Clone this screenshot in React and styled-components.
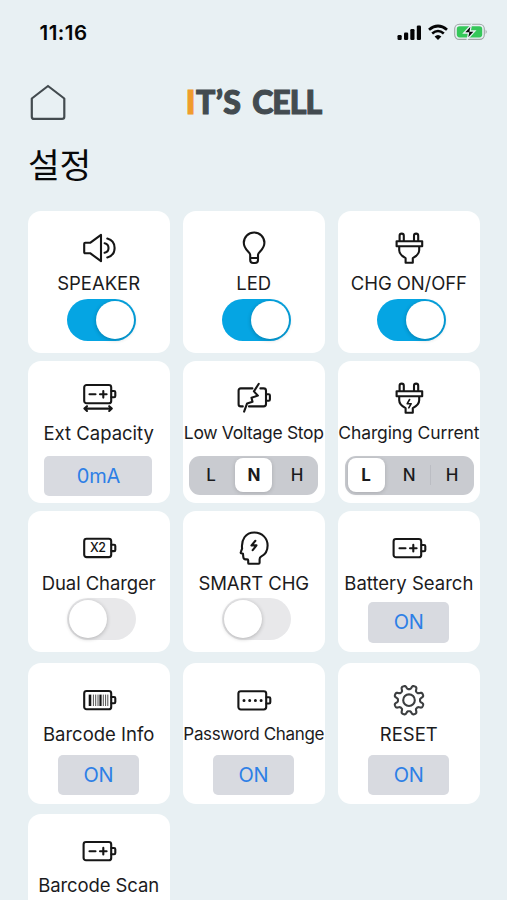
import React from "react";
import styled, { createGlobalStyle } from "styled-components";

const GlobalStyle = createGlobalStyle`
  * {
    box-sizing: border-box;
  }

  body {
    margin: 0;
    background: #e8f0f3;
    font-family: Inter, "Liberation Sans", "Noto Sans CJK KR", sans-serif;
    color: #1b1b1d;
  }
`;

const Screen = styled.main`
  width: 507px;
  height: 900px;
  overflow: hidden;
  background: #e8f0f3;
`;

const StatusBar = styled.div`
  display: flex;
  justify-content: space-between;
  align-items: center;
  height: 64px;
  padding: 0 19px 0 39.5px;
`;

const Time = styled.span`
  font-size: 20.5px;
  font-weight: 600;
  letter-spacing: 0.5px;
  color: #050506;
`;

const StatusIcons = styled.div`
  display: flex;
  align-items: center;
  gap: 6px;

  svg {
    display: block;
  }
`;

const Header = styled.header`
  display: grid;
  grid-template-columns: 1fr auto 1fr;
  align-items: center;
  height: 75px;
  padding: 0 29px;

  svg {
    display: block;
  }
`;

const Logo = styled.h1`
  display: flex;
  gap: 11px;
  margin: 0;
  font-family: Lato, "Liberation Sans", sans-serif;
  font-size: 32px;
  font-weight: 900;
  line-height: 40px;
  white-space: nowrap;
  color: #434b50;
  -webkit-text-stroke: 1.1px currentColor;
`;

const Word = styled.span`
  letter-spacing: ${(p) => p.$track}px;
`;

const Accent = styled.span`
  color: #f09c2c;
`;

const Title = styled.h2`
  margin: 0;
  height: 72px;
  padding-left: 28px;
  font-family: "Noto Sans CJK KR", sans-serif;
  font-size: 34.5px;
  font-weight: 400;
  line-height: 49px;
  letter-spacing: -0.2px;
  color: #08090a;
`;

const Grid = styled.section`
  display: flex;
  flex-direction: column;
  padding: 0 26.5px 0 28px;
`;

const Row = styled.div`
  display: grid;
  grid-template-columns: repeat(3, 141.8px);
  column-gap: 13.3px;
  margin-bottom: ${(p) => p.$gap}px;
`;

const Card = styled.article`
  display: flex;
  flex-direction: column;
  align-items: center;
  height: 141.5px;
  padding-top: 19px;
  border-radius: 13px;
  background: #fff;
`;

const Glyph = styled.svg`
  display: block;
  flex: none;
  width: 36px;
  height: 36px;
  fill: none;
  stroke: ${(p) => p.$tone || "#161616"};
  stroke-width: 2.1;
  stroke-linecap: round;
  stroke-linejoin: round;
`;

const Label = styled.span`
  height: 24px;
  margin-top: ${(p) => p.$top}px;
  margin-right: 0.5px;
  font-size: ${(p) => p.$size}px;
  line-height: 24px;
  letter-spacing: ${(p) => p.$track}px;
  white-space: nowrap;
`;

const Switch = styled.span`
  display: flex;
  justify-content: ${(p) => (p.$on ? "flex-end" : "flex-start")};
  width: 69px;
  height: 42px;
  margin: 3.5px 0 0 5px;
  padding: 2px;
  border-radius: 21px;
  background: ${(p) => (p.$on ? "#05a5e3" : "#e8e8ea")};
`;

const Knob = styled.span`
  width: 38px;
  height: 38px;
  border-radius: 50%;
  background: #fff;
  box-shadow: 0 1px 4px rgba(0, 0, 0, 0.24);
`;

const ValueButton = styled.button`
  width: ${(p) => p.$width}px;
  height: 40.5px;
  margin: ${(p) => p.$top}px 1px 0 0;
  padding: 0;
  border: none;
  border-radius: 5px;
  background: #d8dae0;
  color: #2d7fe6;
  font-family: inherit;
  font-size: 20px;
  letter-spacing: -0.3px;
`;

const Segments = styled.div`
  display: grid;
  grid-template-columns: repeat(3, 43px);
  width: 129px;
  height: 39px;
  margin-top: 10.5px;
  border-radius: 11px;
  background: #c9cbd0;
`;

const Segment = styled.span`
  display: flex;
  align-items: center;
  justify-content: center;
  margin: 2.5px 3px;
  border-radius: 8px;
  font-size: 17px;
  font-weight: ${(p) => (p.$active ? 700 : 500)};
  background: ${(p) => (p.$active ? "#fff" : "transparent")};
  box-shadow: ${(p) => (p.$active ? "0 1px 4px rgba(0, 0, 0, 0.16)" : "none")};
`;

const Divided = styled.span`
  display: grid;
  background: ${(p) =>
    p.$divider
      ? "linear-gradient(#bbbdc3, #bbbdc3) right center / 1px 20px no-repeat"
      : "none"};
`;

function Bars() {
  return (
    <svg width="25" height="17" viewBox="0 0 25 17" fill="#050506">
      <rect x="0.5" y="11" width="4.2" height="5" rx="1.2" />
      <rect x="7" y="8.5" width="4.2" height="7.5" rx="1.2" />
      <rect x="13.3" y="5" width="4.2" height="11" rx="1.2" />
      <rect x="19.8" y="1.5" width="4.2" height="14.5" rx="1.2" />
    </svg>
  );
}

function Wifi() {
  return (
    <svg width="20" height="17" viewBox="0 0 20 17" fill="none">
      <path d="M1 5.8Q10-1.8 19 5.8" stroke="#050506" strokeWidth="2.8" />
      <path d="M4.2 9.5Q10 4.5 15.8 9.5" stroke="#050506" strokeWidth="2.6" />
      <path d="M6.6 12.6Q10 9.3 13.4 12.6L10 16z" fill="#050506" />
    </svg>
  );
}

function Charge() {
  return (
    <svg width="34" height="18" viewBox="0 0 34 18">
      <rect x="0.7" y="1.2" width="29.6" height="15.2" rx="4.6" fill="#e8f0f3" stroke="#9ea6a4" strokeWidth="1.1" />
      <rect x="2.8" y="3.2" width="25.4" height="11.2" rx="2.8" fill="#35c759" />
      <path d="M31.6 6.5q2.3 2.3 0 4.6z" fill="#9ea6a4" />
      <path d="M17.4 1.8L9.7 10h4.8l-1.2 6.2L21 8h-4.8z" fill="#050506" stroke="#e8f0f3" strokeWidth="1.3" />
    </svg>
  );
}

function Home() {
  return (
    <svg width="38" height="38" viewBox="0 0 38 38" fill="none" stroke="#434b4f" strokeWidth="2.2" strokeLinejoin="round">
      <path d="M2.8 15.5L19 3l16.3 12.5v18.2q0 2.2-2.2 2.2H5q-2.2 0-2.2-2.2z" />
    </svg>
  );
}

function Shell({ y = 9, x = 3.2 }) {
  return (
    <>
      <rect x={x} y={y} width={30.2 - x} height="18.3" rx="2.4" />
      <path d={`M30.5 ${y + 6}h2.6q1.2 0 1.2 1.2v3.9q0 1.2-1.2 1.2h-2.6`} />
    </>
  );
}

function PlusMinus({ y = 18.2 }) {
  return <path d={`M8.5 ${y}h6M19 ${y}h6.6M22.3 ${y - 3.3}v6.6`} />;
}

const PLUG =
  "M5.6 11.2h25.6v5H5.6zM8.6 11V5.7a2.1 2.1 0 0 1 4.2 0V11M23 11V5.7a2.1 2.1 0 0 1 4.2 0V11M8.2 16.5v3.7q0 4.4 6.4 7.9v4.7h7.2v-4.7q6.4-3.5 6.4-7.9v-3.7";

// eight soft teeth around the centre, valley at the top
const GEAR = Array.from({ length: 144 }, (_, i) => {
  const a = (i / 144) * Math.PI * 2;
  const r = 13 - 2 * Math.tanh(2.2 * Math.cos(8 * a));
  const px = (18 + r * Math.sin(a)).toFixed(2);
  const py = (18.2 - r * Math.cos(a)).toFixed(2);
  return `${i ? "L" : "M"}${px} ${py}`;
}).join("");

const icons = {
  speaker: (
    <path d="M3.2 13.8q0-1 1-1h4.9L20 4.8v26.4l-10.9-8H4.2q-1 0-1-1zM23.6 13.2a4.9 4.9 0 0 1 0 9.6M26.3 8.6q7.3 2 7.3 9.4t-7.3 9.4" />
  ),
  bulb: (
    <path d="M14.2 28.2v-3.4c0-2.8-6.4-5-6.4-12a10.3 10.3 0 0 1 20.6 0c0 7-6.4 9.2-6.4 12V30q0 3-3 3h-1.8q-3 0-3-3zM14.2 28h7.8" />
  ),
  plug: <path d={PLUG} />,
  plugBolt: (
    <>
      <path d={PLUG} />
      <path d="M18.6 19.5l-2.4 4.2h4l-2.4 4.1" strokeWidth="1.6" />
    </>
  ),
  extend: (
    <>
      <Shell y={5} />
      <PlusMinus y={14.3} />
      <path d="M3.6 28.6h27M6 26.2l-2.6 2.4L6 31M28.2 26.2l2.6 2.4-2.6 2.4" />
    </>
  ),
  low: (
    <>
      <path d="M16.4 8.4H4.8q-2.2 0-2.2 2.2v13.6q0 2.2 2.2 2.2h2M13 26.4h14.6q2.4 0 2.4-2.4V10.8q0-2.4-2.4-2.4h-3.2" />
      <path d="M30.3 14.3h2.4q1.2 0 1.2 1.2v4q0 1.2-1.2 1.2h-2.4" />
      <path d="M22.8 3.8l-4.9 7.6 4 4.2-6.4 2.2 1 4-5.4 1.6-3 8.2" />
    </>
  ),
  dual: (
    <>
      <Shell y={8.8} />
      <text x="16.8" y="22.4" textAnchor="middle" fontSize="12.5" fontWeight="500" letterSpacing="-0.5" fill="#161616" stroke="none">
        X2
      </text>
    </>
  ),
  head: (
    <>
      <path d="M13 33.8q-.8 0-.8-.9v-2.5q0-1-1-1H9.7q-2.2 0-2.4-2.4l-.3-3.2-1.7-.5q-.9-.3-.5-1.2l1.3-3.4C5.1 9.8 9.4 2.5 18.3 2.5c8 0 13.3 6 13.3 13 0 5.2-2.7 9.1-6.2 10.9-1.4.8-1.8 1.4-1.8 2.9v3.5q0 1-1 1z" />
      <path d="M19.4 10.8l-3.9 4.6h5l-3.8 4.8" />
    </>
  ),
  battery: (
    <>
      <Shell x={2.6} />
      <PlusMinus />
    </>
  ),
  barcode: (
    <>
      <Shell />
      <g strokeLinecap="butt">
        <path d="M9 12.6v11.4" strokeWidth="2.6" />
        <path d="M12.4 12.6v11.4M14.7 12.6v11.4M17 12.6v11.4M22.3 12.6v11.4M24.6 12.6v11.4M26.8 12.6v11.4" strokeWidth="1" opacity="0.75" />
        <path d="M19.5 12.6v11.4" strokeWidth="2.2" />
      </g>
    </>
  ),
  password: (
    <>
      <Shell x={2.4} y={9.2} />
      <path d="M8 18.4h.01M13.7 18.4h.01M19.4 18.4h.01M25.1 18.4h.01" strokeWidth="3" />
    </>
  ),
  gear: (
    <>
      <path d={GEAR + "z"} />
      <circle cx="18" cy="18.2" r="5.8" />
    </>
  ),
};

const rows = [
  {
    gap: 8.5,
    labelTop: 5,
    cards: [
      { icon: "speaker", label: "SPEAKER", control: "switch", on: true },
      { icon: "bulb", label: "LED", control: "switch", on: true },
      { icon: "plug", label: "CHG ON/OFF", control: "switch", on: true, track: -0.1 },
    ],
  },
  {
    gap: 8,
    labelTop: 5,
    cards: [
      { icon: "extend", label: "Ext Capacity", control: "button", value: "0mA", width: 108, top: 10.5 },
      { icon: "low", label: "Low Voltage Stop", size: 17.5, track: -0.32, control: "segments", active: "N" },
      { icon: "plugBolt", label: "Charging Current", size: 17.5, track: -0.1, control: "segments", active: "L" },
    ],
  },
  {
    gap: 10.5,
    labelTop: 5,
    cards: [
      { icon: "dual", label: "Dual Charger", control: "switch", track: -0.1 },
      { icon: "head", label: "SMART CHG", control: "switch", track: -0.1 },
      { icon: "battery", label: "Battery Search", control: "button", value: "ON", width: 81, top: 7.5 },
    ],
  },
  {
    gap: 10,
    labelTop: 4,
    cards: [
      { icon: "barcode", label: "Barcode Info", control: "button", value: "ON", width: 81, top: 9 },
      { icon: "password", label: "Password Change", size: 17, track: -0.34, control: "button", value: "ON", width: 81, top: 9 },
      { icon: "gear", label: "RESET", control: "button", value: "ON", width: 81, top: 9, tone: "#3d3f41" },
    ],
  },
  {
    gap: 0,
    labelTop: 3.5,
    cards: [{ icon: "battery", label: "Barcode Scan", track: -0.1 }],
  },
];

function Control({ item }) {
  if (item.control === "switch") {
    return (
      <Switch $on={item.on} role="switch" aria-checked={!!item.on}>
        <Knob />
      </Switch>
    );
  }
  if (item.control === "button") {
    return (
      <ValueButton $width={item.width} $top={item.top}>
        {item.value}
      </ValueButton>
    );
  }
  if (item.control === "segments") {
    return (
      <Segments>
        {["L", "N", "H"].map((name) => (
          <Divided key={name} $divider={name === "N" && item.active === "L"}>
            <Segment $active={name === item.active}>{name}</Segment>
          </Divided>
        ))}
      </Segments>
    );
  }
  return null;
}

export default function App() {
  return (
    <>
      <GlobalStyle />
      <Screen>
        <StatusBar>
          <Time>11:16</Time>
          <StatusIcons>
            <Bars />
            <Wifi />
            <Charge />
          </StatusIcons>
        </StatusBar>
        <Header>
          <Home />
          <Logo>
            <Word $track={0.4}>
              <Accent>I</Accent>T’S
            </Word>
            <Word $track={-1}>CELL</Word>
          </Logo>
        </Header>
        <Title>설정</Title>
        <Grid>
          {rows.map((row, i) => (
            <Row key={i} $gap={row.gap}>
              {row.cards.map((item) => (
                <Card key={item.label}>
                  <Glyph viewBox="0 0 36 36" $tone={item.tone}>
                    {icons[item.icon]}
                  </Glyph>
                  <Label $top={row.labelTop} $size={item.size || 18.5} $track={item.track || 0}>
                    {item.label}
                  </Label>
                  <Control item={item} />
                </Card>
              ))}
            </Row>
          ))}
        </Grid>
      </Screen>
    </>
  );
}
